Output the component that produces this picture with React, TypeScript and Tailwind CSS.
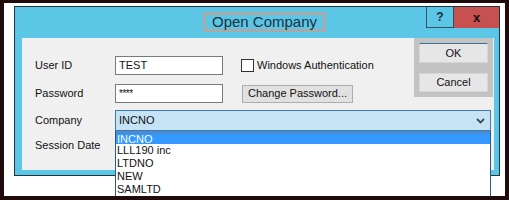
const font = { fontFamily: '"Liberation Sans", Arial, sans-serif' };

function Chevron() {
  return (
    <svg width="9" height="6" viewBox="0 0 9 6" className="text-[#3b4a55]">
      <path d="M1 1 L4.5 4.5 L8 1" fill="none" stroke="currentColor" strokeWidth="1.8" />
    </svg>
  );
}

const companies = ["INCNO", "LLL190 inc", "LTDNO", "NEW", "SAMLTD"];

function TitleBar() {
  return (
    <div className="flex h-[31px] items-start">
      <div className="ml-[188px] mt-[5px] flex h-[20px] w-[123px] items-center justify-center border-[3px] border-[#a9a9a9] text-[15px] text-[#1d3140]">
        Open Company
      </div>
      <div className="ml-auto flex">
        <div className="flex h-[21px] w-[28px] items-center justify-center border border-t-0 border-[#34515e] text-[12px] font-bold text-[#1d2a33]">
          ?
        </div>
        <div className="flex h-[21px] w-[45px] items-center justify-center bg-[#c75050] text-[13px] font-bold text-[#1a1010]">
          x
        </div>
      </div>
    </div>
  );
}

function Content() {
  return (
    <div className="ml-[7px] mr-[5px] h-[132px] bg-[#f0f0f0] pl-[13px] text-[11px] text-[#111]">
      <div className="flex">
        <div className="flex w-[379px] flex-col gap-[9px] pt-[18px]">
          <div className="flex h-[19px] items-center">
            <span className="w-[80px]">User ID</span>
            <div className="flex h-[19px] w-[108px] items-center border border-[#7a7a7a] bg-white px-[3px]">TEST</div>
            <div className="ml-[18px] h-[13px] w-[13px] border border-[#333] bg-white" />
            <span className="ml-[3px]">Windows Authentication</span>
          </div>
          <div className="flex h-[19px] items-center">
            <span className="w-[80px]">Password</span>
            <div className="flex h-[19px] w-[108px] items-center border border-[#7a7a7a] bg-white px-[3px] text-[10px] tracking-[-0.5px]">****</div>
            <div className="ml-[19px] flex h-[18px] w-[111px] items-center justify-center border border-[#adadad] bg-[#e1e1e1]">
              Change Password...
            </div>
          </div>
        </div>
        <div className="flex h-[59px] w-[79px] flex-col gap-[10px] bg-[#c3c3c3] p-[5px]">
          <div className="flex h-[20px] items-center justify-center border border-[#d6d6d6] border-t-[#3a6f96] bg-[#e6e6e6]">OK</div>
          <div className="flex h-[19px] items-center justify-center border border-[#d6d6d6] bg-[#e6e6e6]">Cancel</div>
        </div>
      </div>
      <div className="mt-[7px] flex h-[21px] items-center">
        <span className="w-[80px]">Company</span>
        <div className="relative flex h-[21px] w-[376px] items-center border border-[#3c7ca6] bg-[#c5e3f5] pl-[3px] pr-[5px]">
          <span>INCNO</span>
          <span className="ml-auto"><Chevron /></span>
          <ul className="absolute left-[-1px] top-[20px] z-10 h-[80px] w-[376px] border-x border-[#2b5d7a] bg-white">
            {companies.map((c, i) => (
              <li
                key={c}
                className={
                  i === 0
                    ? "h-[13px] border-t-[3px] border-[#4a8bd6] bg-[#3399ff] pl-[1px] leading-[10px] text-white"
                    : "h-[13px] pl-[1px] leading-[13px]"
                }
              >
                {c}
              </li>
            ))}
          </ul>
        </div>
      </div>
      <div className="mt-[7px] flex h-[14px] items-center">
        <span className="w-[80px]">Session Date</span>
      </div>
    </div>
  );
}

export default function App() {
  return (
    <div className="h-[200px] w-[509px] overflow-hidden bg-[#1f0b0b] pb-[4px] pl-[4px] pr-[4px] pt-[3px]" style={font}>
      <div className="relative h-[193px] w-[501px] overflow-hidden bg-white pl-[10px] pt-[3px]">
        <div className="flex h-[170px] w-[486px] flex-col border border-[#22343c] bg-[#5bc6e5]">
          <TitleBar />
          <Content />
        </div>
      </div>
    </div>
  );
}
